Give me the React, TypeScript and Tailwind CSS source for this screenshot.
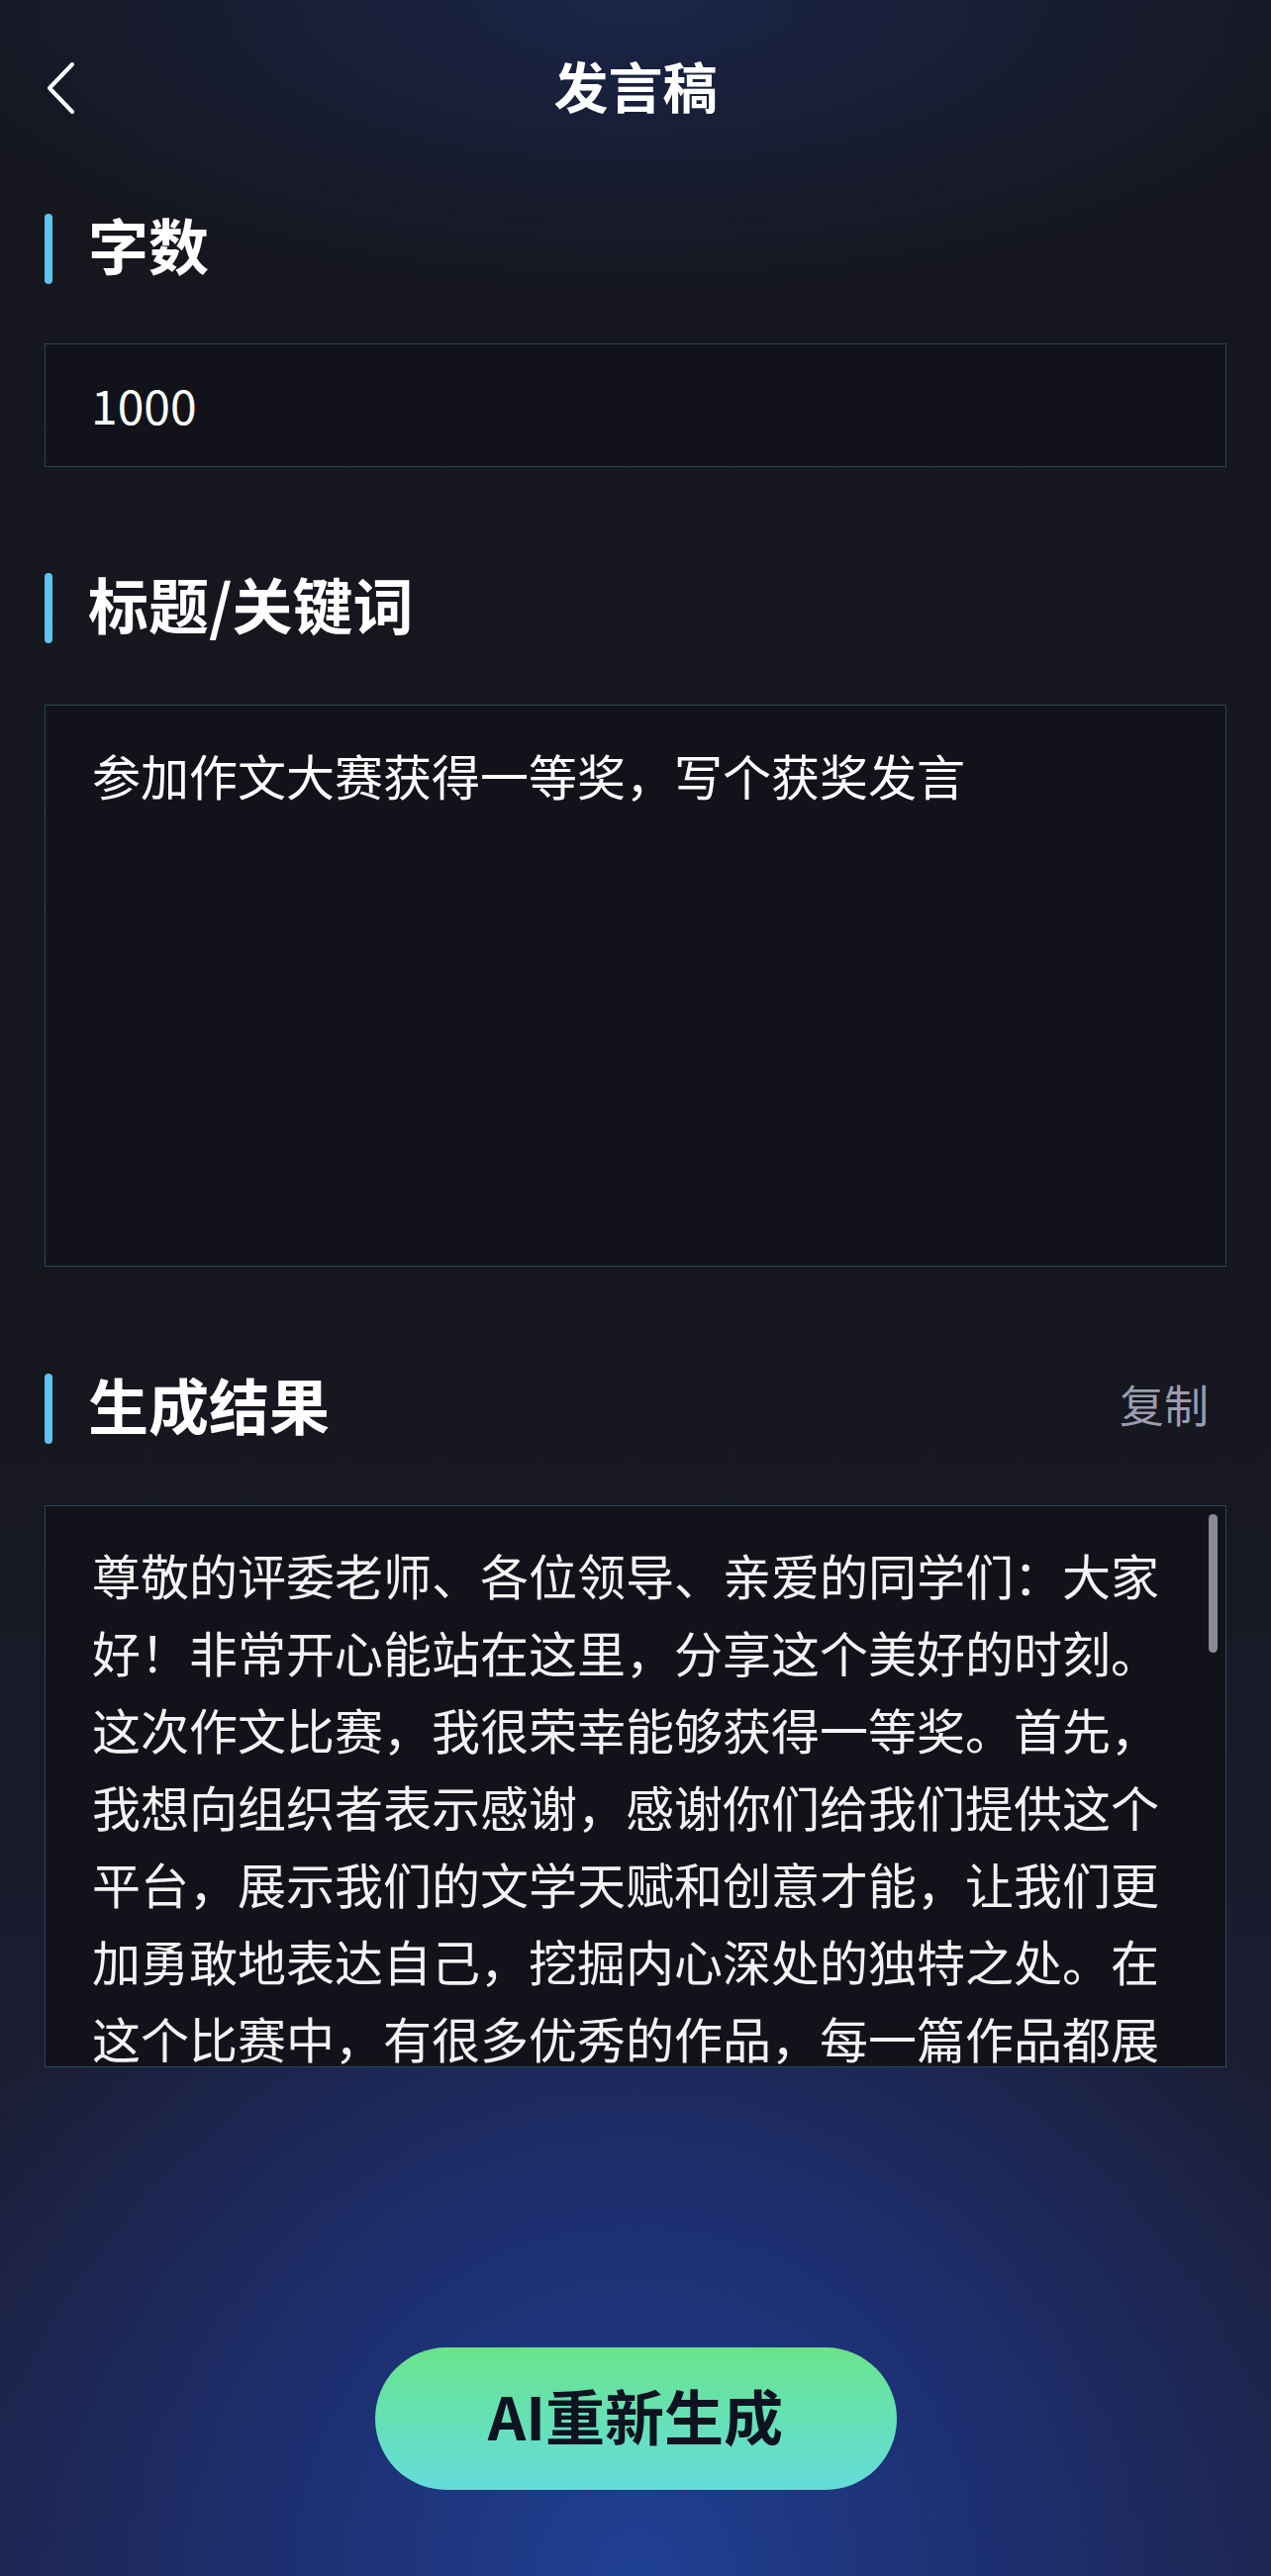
import React from "react";

const font = { fontFamily: '"Noto Sans CJK SC", "Noto Sans", sans-serif' };

function SectionTitle({ title, right }: { title: string; right?: string }) {
  return (
    <div className="flex items-center h-[72px]">
      <div className="w-[8px] h-[71px] rounded-full bg-[#5cc3ec]" />
      <div className="ml-[36px] pb-[10px] text-[61px] font-bold text-white leading-none">{title}</div>
      {right && <div className="ml-auto mr-[18px] pb-[10px] text-[45px] text-[#9b9dac] leading-none">{right}</div>}
    </div>
  );
}

export default function App() {
  const result =
    "尊敬的评委老师、各位领导、亲爱的同学们：大家好！非常开心能站在这里，分享这个美好的时刻。这次作文比赛，我很荣幸能够获得一等奖。首先，我想向组织者表示感谢，感谢你们给我们提供这个平台，展示我们的文学天赋和创意才能，让我们更加勇敢地表达自己，挖掘内心深处的独特之处。在这个比赛中，有很多优秀的作品，每一篇作品都展现了作者独特的视角和真挚的情感，我从中学到了很多。";
  return (
    <div
      style={font}
      className="w-full min-h-[2603px] flex flex-col px-[45px] bg-[radial-gradient(ellipse_760px_300px_at_50%_0%,#1a2549_0%,rgba(26,37,73,0)_100%),radial-gradient(ellipse_800px_820px_at_50%_100%,#1f3f92_0%,#1d2f70_45%,rgba(29,47,112,0)_100%),linear-gradient(to_bottom,#15161e_0%,#16171f_55%,#1e2242_100%)]"
    >
      <div className="h-[178px] grid grid-cols-[1fr_auto_1fr] items-center">
        <div className="flex items-center">
          <svg width="32" height="54" viewBox="0 0 32 54" fill="none">
            <path d="M28 3 L5 27 L28 51" stroke="white" strokeWidth="4" strokeLinecap="round" strokeLinejoin="round" />
          </svg>
        </div>
        <div className="pb-[8px] text-[55px] font-bold text-white leading-none">发言稿</div>
        <div />
      </div>

      <div className="mt-[37px]">
        <SectionTitle title="字数" />
      </div>
      <div className="mt-[60px] h-[125px] border border-[#294657] bg-[#12131a] flex items-center pl-[46px]">
        <span className="pb-[4px] text-[48px] text-white leading-none">1000</span>
      </div>

      <div className="mt-[106px]">
        <SectionTitle title="标题/关键词" />
      </div>
      <div className="mt-[62px] h-[568px] border border-[#294657] bg-[#12131a] pl-[47px] pr-[47px] pt-[31px]">
        <div className="text-[49px] leading-[78px] text-white">参加作文大赛获得一等奖，写个获奖发言</div>
      </div>

      <div className="mt-[107px]">
        <SectionTitle title="生成结果" right="复制" />
      </div>
      <div className="mt-[62px] h-[568px] border border-[#294657] bg-[#12131a] relative overflow-hidden">
        <div className="pl-[47px] pr-[47px] pt-[30px] text-[49px] leading-[78px] text-[#f2f2f2]">{result}</div>
        <div className="absolute right-[8px] top-[8px] w-[9px] h-[140px] rounded-full bg-[#8b8b92]" />
      </div>

      <div className="mt-[283px] flex justify-center">
        <button className="w-[527px] h-[144px] rounded-full bg-gradient-to-b from-[#6ae48a] to-[#64dcdb] flex items-center justify-center pb-[8px] text-[60px] font-bold text-[#0e1321]">
          AI重新生成
        </button>
      </div>
    </div>
  );
}
